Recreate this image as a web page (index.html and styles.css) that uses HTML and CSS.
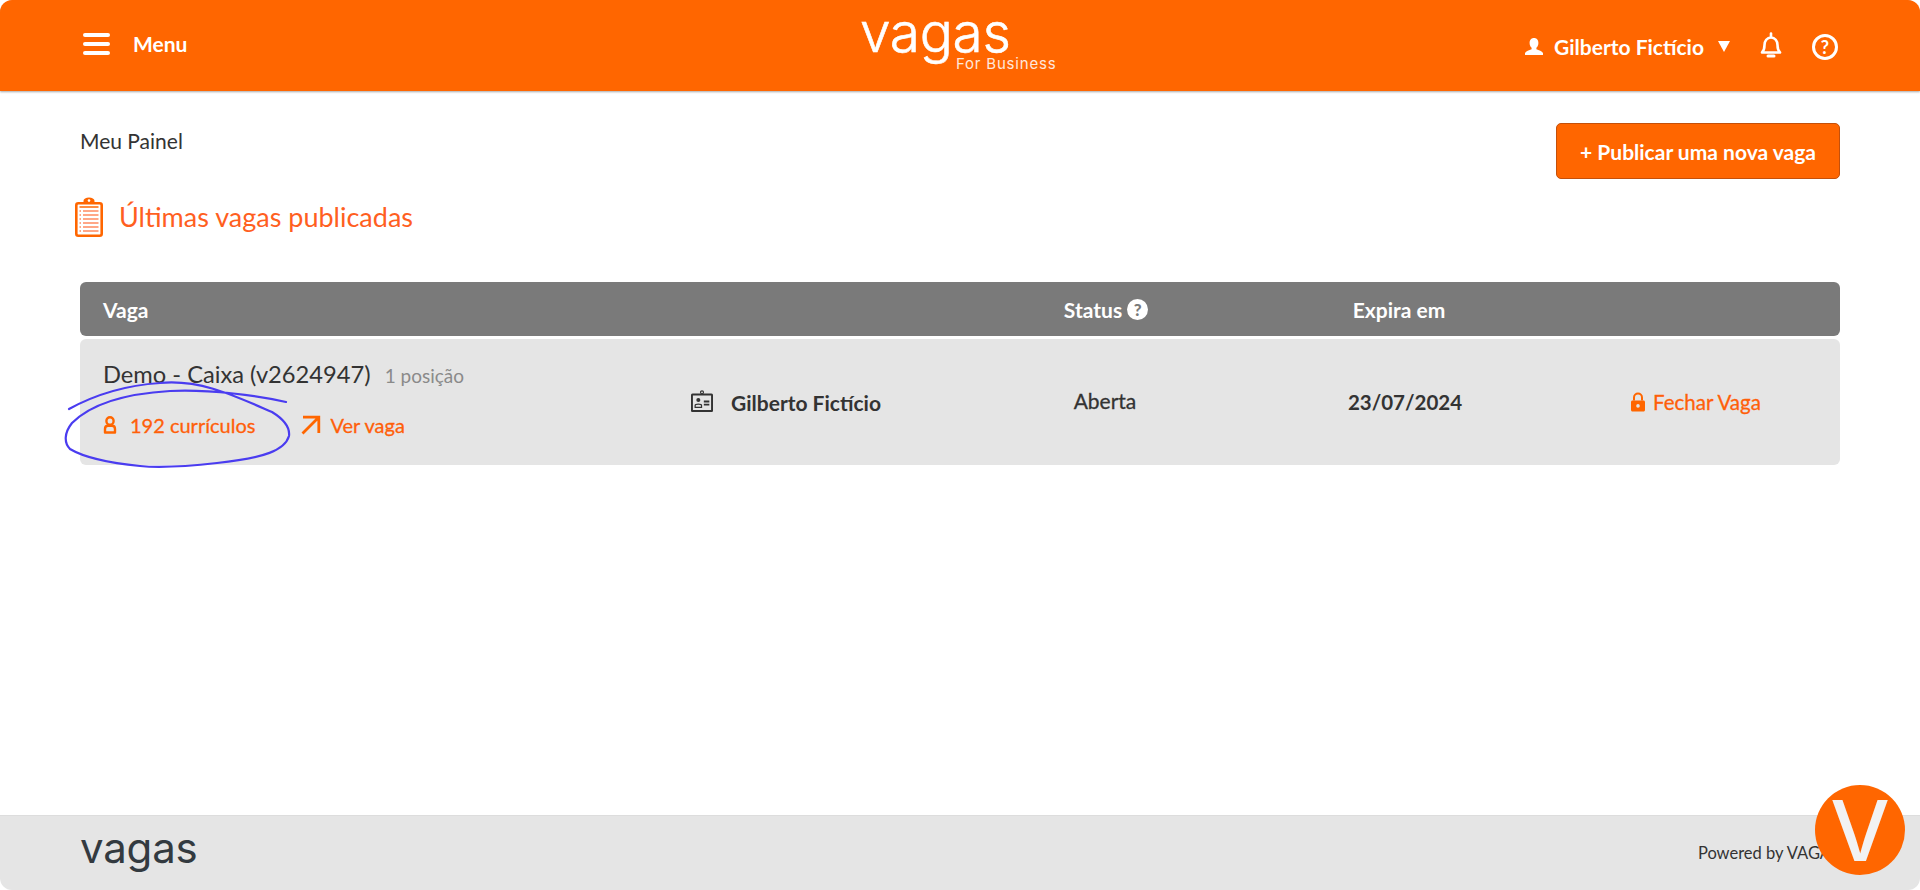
FILE: index.html
```html
<!DOCTYPE html>
<html lang="pt-BR">

<head>
  <meta charset="UTF-8">
  <meta name="viewport" content="width=device-width, initial-scale=1.0">
  <title>Meu Painel - VAGAS For Business</title>
  <link rel="stylesheet" href="styles.css">
</head>

<body>
  <div class="page">
    <!-- Header -->
    <header class="topbar">
      <div class="menu">
        <span class="burger"><i></i><i></i><i></i></span>
        <span class="menu-label">Menu</span>
      </div>
      <div class="brand">
        <span class="brand-name">vagas</span>
        <span class="brand-sub">For Business</span>
      </div>
      <div class="user-area">
        <svg class="icon-user" viewBox="0 0 20 20" fill="#fff">
          <path d="M10 1c3 0 4.400 2.300 4.400 5 0 2-.8 3.800-2 4.800v1.500c2.500.8 5.600 1.800 6.600 3.700v2H1v-2c1-1.900 4.100-2.900 6.600-3.700v-1.500c-1.200-1-2-2.800-2-4.800 0-2.700 1.400-5 4.400-5z"/>
        </svg>
        <span class="user-name">Gilberto Fictício</span>
        <span class="caret"></span>
        <svg class="icon-bell" viewBox="0 0 22 26" fill="none" stroke="#fff" stroke-width="2.600" stroke-linejoin="round">
          <path d="M2 20.500c2-2 2.500-3.500 2.500-7.500 0-4 2.500-7.500 6.500-7.500s6.500 3.500 6.500 7.500c0 4 .5 5.500 2.500 7.500z"/>
          <path d="M11 1.500v3" stroke-linecap="round"/>
          <path d="M8 24h6" stroke-linecap="round" stroke-width="3"/>
        </svg>
        <span class="help-ring">?</span>
      </div>
    </header>

    <main class="content">
      <div class="title-row">
        <div class="breadcrumb">Meu Painel</div>
        <a class="btn-new" href="#">+ Publicar uma nova vaga</a>
      </div>

      <h2 class="section-title">
        <svg class="icon-clipboard" viewBox="0 0 28 40" fill="none" stroke="#ff6600">
          <rect x="1.300" y="6.300" width="25.400" height="32.400" rx="2" stroke-width="2.600"/>
          <path d="M8.500 7V3.800a5.500 3.300 0 0 1 11 0V7z" fill="#ff6600" stroke="none"/>
          <circle cx="14" cy="3.600" r="1.300" fill="#fff" stroke="none"/>
          <path d="M4.500 10h19" stroke-width="1.400"/>
          <path d="M8 14h15.500M8 18h15.500M8 22h15.500M8 26h15.500M8 30h15.500M8 34h15.500" stroke-width="1.500" stroke="#ff8a60"/>
          <path d="M4.500 14h1.500M4.500 18h1.500M4.500 22h1.500M4.500 26h1.500M4.500 30h1.500M4.500 34h1.500" stroke-width="1.500" stroke="#ff8a60"/>
        </svg>
        Últimas vagas publicadas
      </h2>

      <div class="jobs">
        <div class="jobs-head">
          <div>Vaga</div>
          <div></div>
          <div class="cell-center head-status">
            Status
            <span class="help-solid">?</span>
          </div>
          <div class="cell-center head-expira">Expira em</div>
          <div></div>
        </div>

        <div class="jobs-row">
          <div class="job-info">
            <div class="job-name">Demo - Caixa (v2624947) <span class="job-pos">1 posição</span></div>
            <div class="job-links">
              <a href="#" class="link">
                <svg class="icon-cv" viewBox="0 0 14 18" fill="none" stroke="#ff6600" stroke-width="2.400">
                  <ellipse cx="7" cy="5" rx="3.600" ry="3.800"/>
                  <path d="M2 16.500v-3.500c0-2 1-3.200 3-3.200h4c2 0 3 1.200 3 3.200v3.500z" stroke-linejoin="round"/>
                </svg>
                192 currículos
              </a>
              <a href="#" class="link">
                <svg class="icon-arrow" viewBox="0 0 20 20" fill="none" stroke="#ff6600" stroke-width="2.800">
                  <path d="M2 2.200h15.800V18M17.500 2.500L1.500 18.500"/>
                </svg>
                Ver vaga
              </a>
            </div>
          </div>
          <div class="job-owner">
            <svg class="icon-card" viewBox="0 0 24 24" fill="none" stroke="#333">
              <rect x="1" y="5" width="22" height="18" rx="1" stroke-width="2.200"/>
              <circle cx="12" cy="2.500" r="1.600" stroke-width="1.300"/>
              <circle cx="8" cy="11" r="2.200" fill="#333" stroke="none"/>
              <path d="M4.500 19v-2c0-1 1-1.500 3.500-1.500s3.500.5 3.500 1.500v2z" stroke-width="1.300"/>
              <path d="M14 12.500h6M14 16h6" stroke-width="2"/>
            </svg>
            Gilberto Fictício
          </div>
          <div class="cell-center job-status">Aberta</div>
          <div class="cell-center job-date">23/07/2024</div>
          <div class="job-action">
            <a href="#" class="link">
              <svg class="icon-lock" viewBox="0 0 14 19" fill="#ff6600">
                <path d="M3 8V5a4 4 0 0 1 8 0v3" fill="none" stroke="#ff6600" stroke-width="2"/>
                <path fill-rule="evenodd" d="M1.500 8h11c.8 0 1.500.7 1.500 1.500v8c0 .8-.7 1.500-1.500 1.500h-11C.7 19 0 18.300 0 17.500v-8C0 8.700.7 8 1.500 8zM7 11.600a1.800 1.800 0 1 0 0 3.600 1.800 1.800 0 0 0 0-3.600z"/>
              </svg>
              Fechar Vaga
            </a>
          </div>
        </div>
      </div>
    </main>

    <footer class="footer">
      <span class="footer-logo">vagas</span>
      <span class="powered">Powered by VAGAS</span>
    </footer>

    <!-- Blue pen annotation drawn over the row -->
    <svg class="annotation" viewBox="0 0 1920 890" fill="none">
      <path d="M69 409C100 392 130 385 160 383C200 379 235 396 272 412C285 420 290 428 289 436C285 450 265 458 217 463C190 466 160 468 140 466C110 463 85 458 70 449C64 443 64 433 72 423C90 405 120 394 170 391C210 389 260 396 286 402" stroke="#4a3cf0" stroke-width="2.200" stroke-linecap="round"/>
    </svg>

    <div class="chat-badge">V</div>
  </div>
</body>

</html>
```

FILE: styles.css
```css
* {
  box-sizing: border-box;
}

html,
body {
  margin: 0;
  padding: 0;
  background: #fff;
}

body {
  font-family: Lato, Arial, sans-serif;
  color: #333;
}

a {
  text-decoration: none;
}

.page {
  position: relative;
  display: flex;
  flex-direction: column;
  height: 890px;
  overflow: hidden;
  border-radius: 12px;
  background: #fff;
}

/* Header */
.topbar {
  position: relative;
  display: flex;
  align-items: center;
  justify-content: space-between;
  height: 91px;
  padding: 0 82px 0 83px;
  background: #ff6600;
  color: #fff;
  box-shadow: 0 1px 2px rgba(0, 0, 0, 0.35);
}

.menu {
  display: flex;
  align-items: center;
  gap: 23px;
  margin-bottom: 4px;
}

.burger {
  display: flex;
  flex-direction: column;
  gap: 5px;
  width: 27px;
}

.burger i {
  display: block;
  height: 4px;
  border-radius: 2px;
  background: #fff;
}

.menu-label {
  font-size: 21px;
  font-weight: 700;
}

.brand {
  position: absolute;
  left: 860px;
  top: -1px;
  width: 210px;
  height: 80px;
}

.brand-name {
  display: block;
  font-family: Inter, sans-serif;
  font-size: 55px;
  font-weight: 300;
  line-height: 66px;
  letter-spacing: -0.3px;
  -webkit-text-stroke: 0.6px #fff;
}

.brand-sub {
  position: absolute;
  left: 96px;
  top: 55px;
  font-family: Inter, sans-serif;
  font-size: 15px;
  letter-spacing: 0.8px;
  opacity: 0.85;
}

.user-area {
  display: flex;
  align-items: center;
  padding-top: 2px;
}

.icon-user {
  width: 20px;
  height: 20px;
  margin-right: 10px;
}

.user-name {
  font-size: 21px;
  font-weight: 700;
}

.caret {
  width: 0;
  height: 0;
  margin: 0 30px 0 14px;
  border-left: 6px solid transparent;
  border-right: 6px solid transparent;
  border-top: 11px solid #fff;
}

.icon-bell {
  width: 22px;
  height: 26px;
  margin-right: 30px;
  margin-bottom: 4px;
}

.help-ring {
  display: flex;
  align-items: center;
  justify-content: center;
  width: 26px;
  height: 26px;
  border: 3px solid #fff;
  border-radius: 50%;
  font-size: 18px;
  font-weight: 700;
}

/* Main */
.content {
  flex: 1;
  padding: 32px 80px 0;
}

.title-row {
  display: flex;
  justify-content: space-between;
  align-items: flex-start;
}

.breadcrumb {
  padding-top: 5px;
  font-size: 21px;
}

.btn-new {
  display: flex;
  align-items: center;
  justify-content: center;
  width: 284px;
  height: 56px;
  border: 1px solid #c4500a;
  border-radius: 5px;
  background: #ff6600;
  color: #fff;
  font-size: 21px;
  font-weight: 700;
}

.section-title {
  display: flex;
  align-items: center;
  gap: 16px;
  height: 40px;
  margin: 17px 0 46px -5px;
  color: #ff5f1f;
  font-size: 27px;
  font-weight: 400;
}

.icon-clipboard {
  width: 28px;
  height: 40px;
  margin-top: 2px;
}

.jobs-head,
.jobs-row {
  display: grid;
  grid-template-columns: 588px 314px 200px 400px 1fr;
  align-items: center;
  padding-left: 23px;
  border-radius: 6px;
}

.jobs-head {
  height: 54px;
  background: #7a7a7a;
  color: #fff;
  font-size: 21px;
  font-weight: 700;
}

.jobs-row {
  height: 126px;
  margin-top: 3px;
  background: #e5e5e5;
  font-size: 21px;
}

.cell-center {
  display: flex;
  align-items: center;
  justify-content: center;
  gap: 5px;
}

.head-status {
  padding-left: 2px;
}

.head-expira {
  padding-right: 12px;
}

.help-solid {
  display: flex;
  align-items: center;
  justify-content: center;
  width: 21px;
  height: 21px;
  border-radius: 50%;
  background: #fff;
  color: #7a7a7a;
  font-size: 17px;
  font-weight: 900;
}

.job-info {
  padding-bottom: 7px;
}

.job-name {
  margin-bottom: 25px;
  font-size: 23.700px;
}

.job-pos {
  margin-left: 8px;
  color: #8a8a8a;
  font-size: 19px;
}

.job-links {
  display: flex;
  gap: 46px;
}

.link {
  display: inline-flex;
  align-items: center;
  color: #ff5f0a;
  font-size: 20px;
  -webkit-text-stroke: 0.3px #ff5f0a;
}

.icon-cv {
  width: 14px;
  height: 18px;
  margin-right: 13px;
}

.icon-arrow {
  width: 20px;
  height: 20px;
  margin-right: 9px;
}

.job-owner {
  display: flex;
  align-items: center;
  gap: 18px;
  font-weight: 700;
}

.icon-card {
  width: 22px;
  height: 22px;
  margin-bottom: 3px;
}

.job-status {
  margin-bottom: 4px;
  -webkit-text-stroke: 0.3px #333;
}

.job-date {
  font-size: 20.500px;
  font-weight: 700;
}

.job-action {
  padding: 2px 0 0 26px;
}

.job-action .link {
  font-size: 20.500px;
}

.icon-lock {
  width: 14px;
  height: 20px;
  margin-right: 8px;
}

/* Footer */
.footer {
  display: flex;
  align-items: center;
  justify-content: space-between;
  height: 75px;
  padding: 0 80px;
  border-top: 1px solid #ddd;
  background: #e5e5e5;
}

.footer-logo {
  margin-bottom: 10px;
  font-family: Inter, sans-serif;
  font-size: 42px;
  line-height: 50px;
  letter-spacing: -0.2px;
  color: #333a40;
}

.powered {
  font-size: 16.500px;
}

.annotation {
  position: absolute;
  left: 0;
  top: 0;
  width: 1920px;
  height: 890px;
  pointer-events: none;
}

.chat-badge {
  position: absolute;
  left: 1815px;
  top: 785px;
  display: flex;
  align-items: center;
  justify-content: center;
  width: 90px;
  height: 90px;
  border-radius: 50%;
  background: #ff6600;
  color: #f2f2f2;
  font-family: Inter, sans-serif;
  font-size: 84px;
  font-weight: 500;
}
```
